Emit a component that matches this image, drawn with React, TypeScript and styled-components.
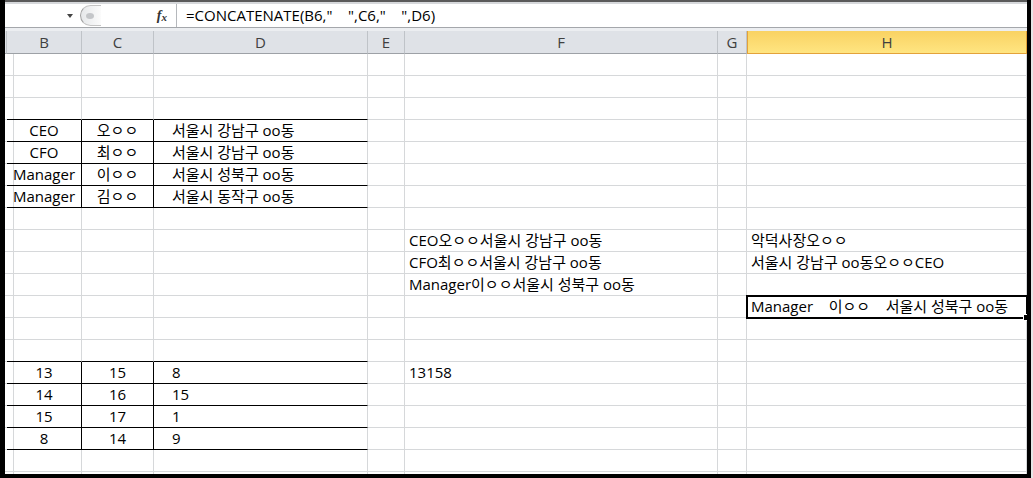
import styled, { createGlobalStyle } from "styled-components";

const GlobalStyle = createGlobalStyle`
  html, body {
    margin: 0;
    padding: 0;
    background: #e6e6e6;
  }
  body {
    font-family: "Open Sans", "Noto Sans CJK KR", sans-serif;
    font-size: 15px;
    color: #000;
  }
`;

/** 열 너비 (행 머리글 조각, B ~ H) */
const COLS = [2, 75, 72, 214, 37, 313, 29, 280];
const HEADS = ["", "B", "C", "D", "E", "F", "G", "H"];

type Align = "left" | "center" | "indent";

interface CellData {
  text?: string;
  align?: Align;
  bb?: boolean; // 아래 테두리(검정)
  br?: boolean; // 오른쪽 테두리(검정)
  selected?: boolean;
}

const row = (cells: Record<number, CellData>): CellData[] =>
  COLS.map((_, i) => cells[i] ?? {});

const table = (a: string, b: string, c: string): CellData[] =>
  row({
    1: { text: a, align: "center", bb: true, br: true },
    2: { text: b, align: "center", bb: true, br: true },
    3: { text: c, align: "indent", bb: true },
  });

const edge = (): Record<number, CellData> => ({
  1: { bb: true },
  2: { bb: true },
  3: { bb: true },
});

const ROWS: CellData[][] = [
  row({}),
  row({}),
  row(edge()),
  table("CEO", "오ㅇㅇ", "서울시 강남구 oo동"),
  table("CFO", "최ㅇㅇ", "서울시 강남구 oo동"),
  table("Manager", "이ㅇㅇ", "서울시 성북구 oo동"),
  table("Manager", "김ㅇㅇ", "서울시 동작구 oo동"),
  row({}),
  row({ 5: { text: "CEO오ㅇㅇ서울시 강남구 oo동" }, 7: { text: "악덕사장오ㅇㅇ" } }),
  row({ 5: { text: "CFO최ㅇㅇ서울시 강남구 oo동" }, 7: { text: "서울시 강남구 oo동오ㅇㅇCEO" } }),
  row({ 5: { text: "Manager이ㅇㅇ서울시 성북구 oo동" } }),
  row({ 7: { text: "Manager    이ㅇㅇ    서울시 성북구 oo동", selected: true } }),
  row({}),
  row(edge()),
  row({
    1: { text: "13", align: "center", bb: true, br: true },
    2: { text: "15", align: "center", bb: true, br: true },
    3: { text: "8", align: "indent", bb: true },
    5: { text: "13158" },
  }),
  table("14", "16", "15"),
  table("15", "17", "1"),
  table("8", "14", "9"),
  row({}),
  row({}),
];

const App = () => {
  return (
    <>
      <GlobalStyle />
      <Window>
        <TopEdge />
        <FormulaBar>
          <NameBox>
            <DropArrow />
          </NameBox>
          <Splitter>
            <Grip />
          </Splitter>
          <FxButton>
            f<small>x</small>
          </FxButton>
          <FormulaInput>{`=CONCATENATE(B6,"    ",C6,"    ",D6)`}</FormulaInput>
        </FormulaBar>
        <BarGap />
        <Sheet>
          {HEADS.map((h, i) => (
            <ColHead key={h + i} $active={h === "H"}>
              {h}
            </ColHead>
          ))}
          {ROWS.map((r, ri) =>
            r.map((c, ci) => (
              <Cell
                key={`${ri}-${ci}`}
                $align={c.align ?? "left"}
                $bb={!!c.bb}
                $br={!!c.br}
                $selected={!!c.selected}
              >
                {c.text}
              </Cell>
            ))
          )}
        </Sheet>
      </Window>
    </>
  );
};

export default App;

const Window = styled.div`
  display: flex;
  flex-direction: column;
  width: 1031px;
  height: 478px;
  box-sizing: border-box;
  overflow: hidden;
  border-left: 5px solid #000;
  border-right: 4px solid #000;
  border-bottom: 4px solid #000;
  background: #fff;
`;

const TopEdge = styled.div`
  flex: none;
  height: 4px;
  box-sizing: border-box;
  border-top: 2px solid #5a5a5a;
  background: #d6d8db;
`;

const FormulaBar = styled.div`
  flex: none;
  display: flex;
  align-items: stretch;
  height: 24px;
  box-sizing: border-box;
  border-bottom: 1px solid #a4a7ab;
  background: #fff;
`;

const NameBox = styled.div`
  position: relative;
  width: 75px;
  flex: none;
`;

const DropArrow = styled.span`
  position: absolute;
  right: 7px;
  top: 10px;
  width: 0;
  height: 0;
  border-left: 3px solid transparent;
  border-right: 3px solid transparent;
  border-top: 4px solid #444;
`;

const Splitter = styled.div`
  flex: none;
  display: flex;
  align-items: center;
  width: 20px;
  margin: 1px 0;
  border-left: 1px solid #a0a0a0;
  border-top: 1px solid #c4c4c4;
  border-bottom: 1px solid #c4c4c4;
  border-radius: 11px 0 0 11px;
  background: linear-gradient(90deg, #e6e8ea, #fbfbfb);
`;

const Grip = styled.span`
  display: block;
  margin-left: 5px;
  width: 8px;
  height: 6px;
  border-radius: 50%;
  background: #c4c6c9;
`;

const FxButton = styled.div`
  flex: none;
  width: 76px;
  display: flex;
  align-items: center;
  justify-content: flex-end;
  padding-right: 9px;
  box-sizing: border-box;
  border-right: 1px solid #b5b8bc;
  font-family: "Liberation Serif", serif;
  font-style: italic;
  font-weight: bold;
  font-size: 14px;
  color: #333;

  & > small {
    font-size: 11px;
    margin-top: 3px;
  }
`;

const FormulaInput = styled.div`
  flex: 1;
  padding-left: 9px;
  line-height: 22px;
  white-space: pre;
`;

const BarGap = styled.div`
  flex: none;
  height: 3px;
  background: #eceef1;
`;

const Sheet = styled.div`
  display: grid;
  grid-template-columns: ${COLS.map((c) => `${c}px`).join(" ")};
  grid-template-rows: 23px;
  grid-auto-rows: 22px;
`;

const ColHead = styled.div<{ $active: boolean }>`
  display: flex;
  align-items: center;
  justify-content: center;
  box-sizing: border-box;
  border-right: 1px solid ${({ $active }) => ($active ? "#e3a23a" : "#bfc3c8")};
  border-bottom: 1px solid ${({ $active }) => ($active ? "#e3a23a" : "#9da1a6")};
  border-left: ${({ $active }) => ($active ? "1px solid #e3a23a" : "none")};
  background: ${({ $active }) =>
    $active ? "linear-gradient(180deg, #f9d263 0%, #ffe581 100%)" : "#dfe2e7"};
  color: #404040;
  font-size: 15px;
  line-height: 1;
`;

const Cell = styled.div<{ $align: Align; $bb: boolean; $br: boolean; $selected: boolean }>`
  position: relative;
  box-sizing: border-box;
  min-width: 0;
  padding: ${({ $align }) => ($align === "indent" ? "0 0 0 18px" : "0 4px")};
  border-right: 1px solid ${({ $br }) => ($br ? "#000" : "#d6d8da")};
  border-bottom: 1px solid ${({ $bb }) => ($bb ? "#000" : "#d6d8da")};
  text-align: ${({ $align }) => ($align === "center" ? "center" : "left")};
  line-height: 20px;
  white-space: pre;
  ${({ $selected }) =>
    $selected &&
    `
    outline: 2px solid #000;
    outline-offset: -1px;
    z-index: 1;
    &::after {
      content: "";
      position: absolute;
      right: -4px;
      bottom: -4px;
      width: 5px;
      height: 5px;
      background: #000;
      border: 1px solid #fff;
    }
  `}
`;
